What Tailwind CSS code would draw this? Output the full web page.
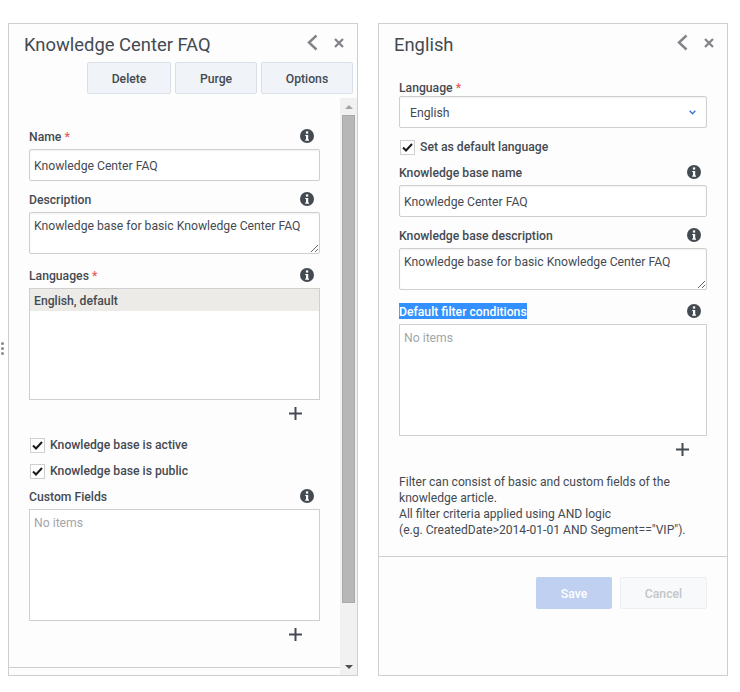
<!DOCTYPE html>
<html lang="en">
<head>
  <meta charset="UTF-8">
  <meta name="viewport" content="width=device-width, initial-scale=1.0">
  <title>Knowledge Center FAQ</title>
  <script src="https://cdn.jsdelivr.net/npm/@tailwindcss/browser@4"></script>
</head>
<body class="bg-white font-[Roboto,sans-serif] text-[12.2px] leading-[18px] text-[#444a52]">
  <div class="relative w-[740px] h-[692px] overflow-hidden flex gap-[20px] pl-[8px] pt-[23px]">

    <!-- resize handle -->
    <div class="absolute left-[1px] top-[342px] grid gap-[2px]">
      <span class="block w-[3px] h-[3px] rounded-full bg-[#8a8a8a]"></span>
      <span class="block w-[3px] h-[3px] rounded-full bg-[#8a8a8a]"></span>
      <span class="block w-[3px] h-[3px] rounded-full bg-[#8a8a8a]"></span>
    </div>

    <!-- left panel -->
    <section class="w-[350px] h-[653px] border border-[#cfcfcf] bg-[#fdfdfd] flex flex-col">
      <div class="h-[38px] flex items-start justify-between pl-[15px] pr-[13px]">
        <h1 class="text-[18.4px] leading-[24px] mt-[9px]">Knowledge Center FAQ</h1>
        <div class="flex items-center gap-[16px] mt-[10px]">
          <svg width="11" height="17" viewBox="0 0 11 17" fill="none" stroke="#808387" stroke-width="2.4"><path d="M9.5 1.5 2 8.5l7.5 7"/></svg>
          <svg width="10" height="10" viewBox="0 0 10 10" fill="none" stroke="#808387" stroke-width="2.2"><path d="M1 1l8 8M9 1 1 9"/></svg>
        </div>
      </div>
      <div class="h-[36px] flex justify-end gap-[4px] pr-[4px] font-medium">
        <button class="w-[84px] h-[32px] pt-[2px] border border-[#d9dfe6] rounded-[2px] bg-[#f0f3f7] text-[#444a52]">Delete</button>
        <button class="w-[82px] h-[32px] pt-[2px] border border-[#d9dfe6] rounded-[2px] bg-[#f0f3f7] text-[#444a52]">Purge</button>
        <button class="w-[92px] h-[32px] pt-[2px] border border-[#d9dfe6] rounded-[2px] bg-[#f0f3f7] text-[#444a52]">Options</button>
      </div>
      <div class="flex flex-1 min-h-0">
        <div class="flex-1 min-w-0 flex flex-col">
          <div class="flex-1 pl-[20px] pr-[20px] pt-[30px] border-b border-[#cfcfcf]">
            <div class="flex items-center justify-between h-[16px] pr-[6px]">
              <label class="h-[16px] font-medium">Name <span class="text-[#ea5a5a]">*</span></label>
              <svg width="14" height="14" viewBox="0 0 14 14"><circle cx="7" cy="7" r="7" fill="#444a52"/><rect x="5.9" y="2.4" width="2.3" height="2.2" fill="#fff"/><path d="M5.2 5.9h3v4.6h.8v1.2H5.2v-1.2H6V7.1h-.8z" fill="#fff"/></svg>
            </div>
            <input value="Knowledge Center FAQ" class="mt-[5px] block w-full h-[32px] px-[4px] pt-[2px] border border-[#cfcfcf] rounded-[2px] bg-white shadow-[inset_0_1px_2px_#0000000f] outline-none" />
            <div class="mt-[10px] flex items-center justify-between h-[16px] pr-[6px]">
              <label class="h-[16px] font-medium">Description</label>
              <svg width="14" height="14" viewBox="0 0 14 14"><circle cx="7" cy="7" r="7" fill="#444a52"/><rect x="5.9" y="2.4" width="2.3" height="2.2" fill="#fff"/><path d="M5.2 5.9h3v4.6h.8v1.2H5.2v-1.2H6V7.1h-.8z" fill="#fff"/></svg>
            </div>
            <textarea class="mt-[5px] block w-full h-[42px] px-[4px] py-[4px] border border-[#cfcfcf] rounded-[2px] bg-white shadow-[inset_0_1px_2px_#0000000f] outline-none">Knowledge base for basic Knowledge Center FAQ</textarea>
            <div class="mt-[13px] flex items-center justify-between h-[16px] pr-[6px]">
              <label class="h-[16px] font-medium">Languages <span class="text-[#ea5a5a]">*</span></label>
              <svg width="14" height="14" viewBox="0 0 14 14"><circle cx="7" cy="7" r="7" fill="#444a52"/><rect x="5.9" y="2.4" width="2.3" height="2.2" fill="#fff"/><path d="M5.2 5.9h3v4.6h.8v1.2H5.2v-1.2H6V7.1h-.8z" fill="#fff"/></svg>
            </div>
            <div class="mt-[5px] h-[112px] border border-[#cfcfcf] bg-white">
              <div class="h-[22px] px-[4px] pt-[2px] flex items-center bg-[#ecebe7] font-medium">English, default</div>
            </div>
            <div class="h-[26px] flex items-center justify-end pr-[18px]">
              <svg width="13" height="13" viewBox="0 0 13 13" fill="none" stroke="#444a52" stroke-width="2"><path d="M6.5 0v13M0 6.5h13"/></svg>
            </div>
            <label class="mt-[11px] flex items-center gap-[5px] h-[16px] pl-[1px] font-medium">
              <span class="w-[15px] h-[15px] border border-[#cfcfcf] bg-white flex items-center justify-center">
                <svg width="11" height="9" viewBox="0 0 11 9" fill="none" stroke="#1a1a1a" stroke-width="2"><path d="M1 4.5 4 7.5 10 1"/></svg>
              </span>
              Knowledge base is active
            </label>
            <label class="mt-[10px] flex items-center gap-[5px] h-[16px] pl-[1px] font-medium">
              <span class="w-[15px] h-[15px] border border-[#cfcfcf] bg-white flex items-center justify-center">
                <svg width="11" height="9" viewBox="0 0 11 9" fill="none" stroke="#1a1a1a" stroke-width="2"><path d="M1 4.5 4 7.5 10 1"/></svg>
              </span>
              Knowledge base is public
            </label>
            <div class="mt-[9px] flex items-center justify-between h-[16px] pr-[6px]">
              <label class="h-[16px] font-medium">Custom Fields</label>
              <svg width="14" height="14" viewBox="0 0 14 14"><circle cx="7" cy="7" r="7" fill="#444a52"/><rect x="5.9" y="2.4" width="2.3" height="2.2" fill="#fff"/><path d="M5.2 5.9h3v4.6h.8v1.2H5.2v-1.2H6V7.1h-.8z" fill="#fff"/></svg>
            </div>
            <div class="mt-[5px] h-[112px] border border-[#cfcfcf] bg-white px-[4px] py-[4px] text-[#a3a6aa]">No items</div>
            <div class="h-[26px] flex items-center justify-end pr-[18px]">
              <svg width="13" height="13" viewBox="0 0 13 13" fill="none" stroke="#444a52" stroke-width="2"><path d="M6.5 0v13M0 6.5h13"/></svg>
            </div>
          </div>
          <div class="h-[7px]"></div>
        </div>
        <!-- scrollbar -->
        <div class="w-[17px] bg-[#f1f1f1] flex flex-col items-center">
          <div class="h-[17px] flex items-center justify-center">
            <span class="w-0 h-0 border-x-[4px] border-x-transparent border-b-[4px] border-b-[#a3a3a3]"></span>
          </div>
          <div class="w-[13px] h-[488px] bg-[#b7b7b7] border border-[#a9a9a9]"></div>
          <div class="flex-1 flex items-end justify-center pb-[6px]">
            <span class="w-0 h-0 border-x-[4px] border-x-transparent border-t-[4px] border-t-[#505050]"></span>
          </div>
        </div>
      </div>
    </section>

    <!-- right panel -->
    <section class="w-[350px] h-[653px] border border-[#cfcfcf] bg-[#fdfdfd] flex flex-col">
      <div class="h-[55px] flex items-start justify-between pl-[15px] pr-[13px]">
        <h2 class="text-[18.4px] leading-[24px] mt-[9px]">English</h2>
        <div class="flex items-center gap-[16px] mt-[10px]">
          <svg width="11" height="17" viewBox="0 0 11 17" fill="none" stroke="#808387" stroke-width="2.4"><path d="M9.5 1.5 2 8.5l7.5 7"/></svg>
          <svg width="10" height="10" viewBox="0 0 10 10" fill="none" stroke="#808387" stroke-width="2.2"><path d="M1 1l8 8M9 1 1 9"/></svg>
        </div>
      </div>
      <div class="px-[20px]">
        <label class="block h-[16px] font-medium">Language <span class="text-[#ea5a5a]">*</span></label>
        <div class="mt-[1px] h-[32px] px-[10px] flex items-center justify-between border border-[#cfcfcf] rounded-[2px] bg-white shadow-[inset_0_1px_2px_#0000000f]">
          <span class="mt-[2px]">English</span>
          <svg width="7" height="5" viewBox="0 0 7 5" fill="none" stroke="#3b6fd4" stroke-width="1.4"><path d="M.7.8 3.5 3.7 6.3.8"/></svg>
        </div>
        <label class="mt-[11px] flex items-center gap-[5px] h-[16px] pl-[1px] font-medium">
          <span class="w-[15px] h-[15px] border border-[#cfcfcf] bg-white flex items-center justify-center">
            <svg width="11" height="9" viewBox="0 0 11 9" fill="none" stroke="#1a1a1a" stroke-width="2"><path d="M1 4.5 4 7.5 10 1"/></svg>
          </span>
          Set as default language
        </label>
        <div class="mt-[9px] flex items-center justify-between h-[16px] pr-[6px]">
          <label class="h-[16px] font-medium">Knowledge base name</label>
          <svg width="14" height="14" viewBox="0 0 14 14"><circle cx="7" cy="7" r="7" fill="#444a52"/><rect x="5.9" y="2.4" width="2.3" height="2.2" fill="#fff"/><path d="M5.2 5.9h3v4.6h.8v1.2H5.2v-1.2H6V7.1h-.8z" fill="#fff"/></svg>
        </div>
        <input value="Knowledge Center FAQ" class="mt-[5px] block w-full h-[32px] px-[4px] pt-[2px] border border-[#cfcfcf] rounded-[2px] bg-white shadow-[inset_0_1px_2px_#0000000f] outline-none" />
        <div class="mt-[10px] flex items-center justify-between h-[16px] pr-[6px]">
          <label class="h-[16px] font-medium">Knowledge base description</label>
          <svg width="14" height="14" viewBox="0 0 14 14"><circle cx="7" cy="7" r="7" fill="#444a52"/><rect x="5.9" y="2.4" width="2.3" height="2.2" fill="#fff"/><path d="M5.2 5.9h3v4.6h.8v1.2H5.2v-1.2H6V7.1h-.8z" fill="#fff"/></svg>
        </div>
        <textarea class="mt-[5px] block w-full h-[42px] px-[4px] py-[4px] border border-[#cfcfcf] rounded-[2px] bg-white shadow-[inset_0_1px_2px_#0000000f] outline-none">Knowledge base for basic Knowledge Center FAQ</textarea>
        <div class="mt-[13px] flex items-center justify-between h-[16px] pr-[6px]">
          <label class="h-[16px] font-medium bg-[#3390ff] text-white">Default filter conditions</label>
          <svg width="14" height="14" viewBox="0 0 14 14"><circle cx="7" cy="7" r="7" fill="#444a52"/><rect x="5.9" y="2.4" width="2.3" height="2.2" fill="#fff"/><path d="M5.2 5.9h3v4.6h.8v1.2H5.2v-1.2H6V7.1h-.8z" fill="#fff"/></svg>
        </div>
        <div class="mt-[5px] h-[112px] border border-[#cfcfcf] bg-white px-[4px] py-[4px] text-[#a3a6aa]">No items</div>
        <div class="h-[26px] flex items-center justify-end pr-[18px]">
          <svg width="13" height="13" viewBox="0 0 13 13" fill="none" stroke="#444a52" stroke-width="2"><path d="M6.5 0v13M0 6.5h13"/></svg>
        </div>
        <p class="mt-[12px] text-[12.1px] leading-[16px]">Filter can consist of basic and custom fields of the knowledge article.<br>All filter criteria applied using AND logic<br>(e.g. CreatedDate&gt;2014-01-01 AND Segment=="VIP").</p>
      </div>
      <div class="mt-[18px] border-t border-[#cfcfcf] pt-[20px] px-[20px] flex justify-end gap-[8px] font-medium">
        <button class="w-[76px] h-[32px] pt-[2px] rounded-[2px] bg-[#bfd0f0] text-white">Save</button>
        <button class="w-[87px] h-[32px] pt-[2px] rounded-[2px] border border-[#eceef1] bg-[#f8f9fb] text-[#c3c5c8]">Cancel</button>
      </div>
    </section>
  </div>
</body>
</html>
